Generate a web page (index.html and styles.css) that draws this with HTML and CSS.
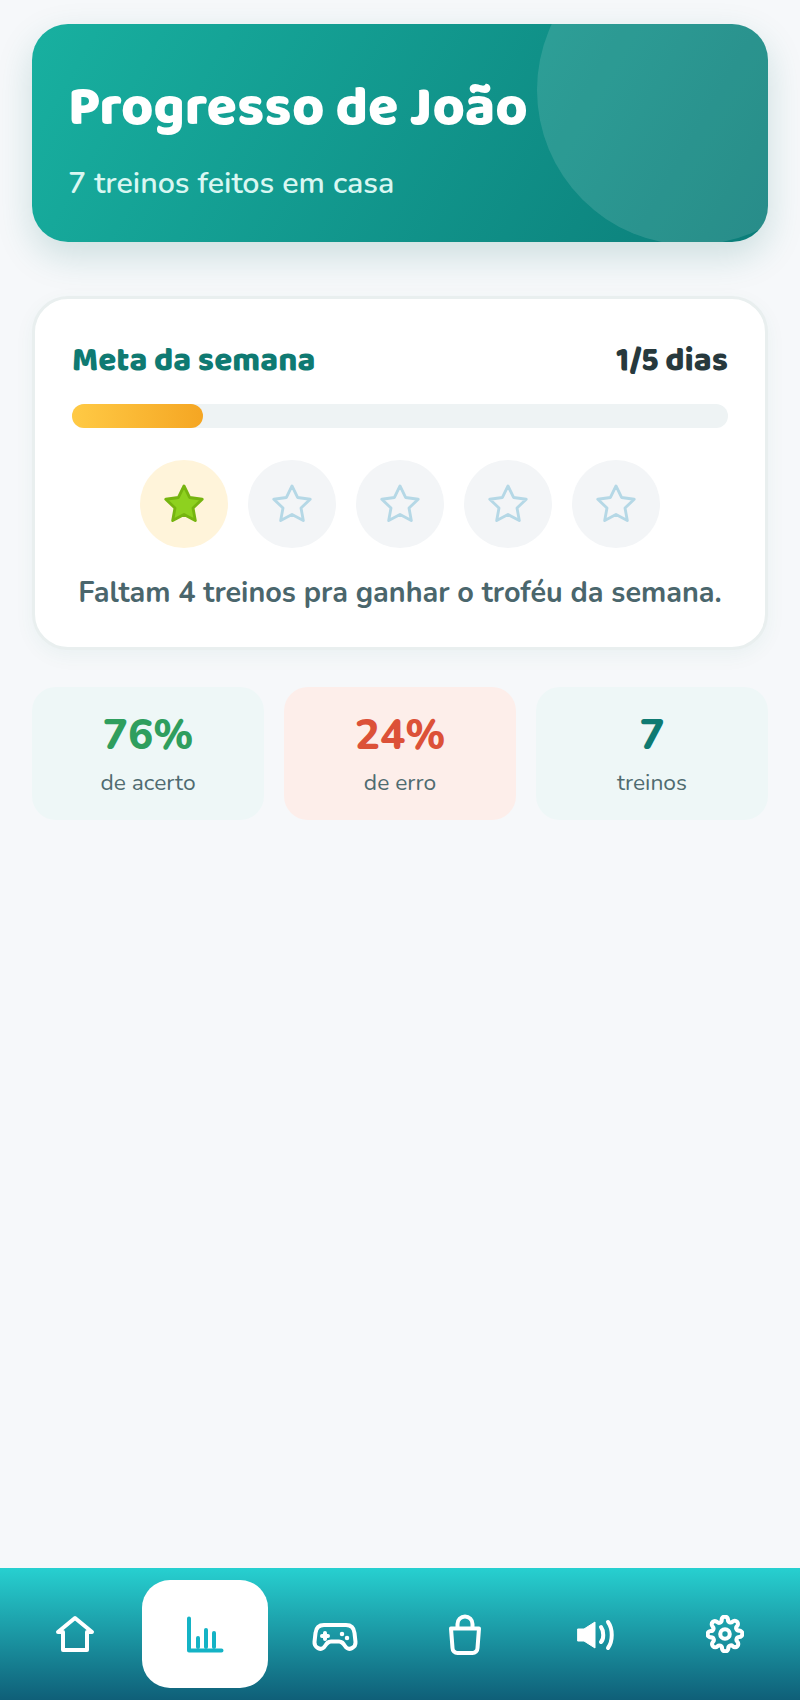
FILE: index.html
```html
<!DOCTYPE html>
<html lang="pt-BR">
<head>
  <meta charset="UTF-8">
  <title>Progresso</title>
  <link rel="stylesheet" href="styles.css">
</head>
<body>
  <main class="page">
    <header class="hero">
      <h1>Progresso de João</h1>
      <p>7 treinos feitos em casa</p>
    </header>

    <section class="goal-card">
      <div class="goal-head">
        <h2>Meta da semana</h2>
        <span class="goal-count">1/5 dias</span>
      </div>
      <div class="bar"><div class="bar-fill"></div></div>
      <div class="stars">
        <div class="star-slot done">
          <svg viewBox="0 0 24 24"><path class="star-on" d="M12 2.6l2.9 6 6.6.9-4.8 4.6 1.2 6.5L12 17.5l-5.900 3.100 1.200-6.500L2.500 9.500l6.600-.9z"/></svg>
        </div>
        <div class="star-slot">
          <svg viewBox="0 0 24 24"><path class="star-off" d="M12 2.6l2.9 6 6.6.9-4.8 4.6 1.2 6.5L12 17.500l-5.900 3.100 1.200-6.500L2.500 9.500l6.600-.9z"/></svg>
        </div>
        <div class="star-slot">
          <svg viewBox="0 0 24 24"><path class="star-off" d="M12 2.6l2.9 6 6.6.9-4.8 4.6 1.2 6.5L12 17.500l-5.900 3.100 1.200-6.500L2.500 9.500l6.600-.9z"/></svg>
        </div>
        <div class="star-slot">
          <svg viewBox="0 0 24 24"><path class="star-off" d="M12 2.6l2.9 6 6.6.9-4.8 4.6 1.2 6.5L12 17.500l-5.900 3.100 1.200-6.500L2.500 9.500l6.600-.9z"/></svg>
        </div>
        <div class="star-slot">
          <svg viewBox="0 0 24 24"><path class="star-off" d="M12 2.6l2.9 6 6.6.9-4.8 4.6 1.2 6.5L12 17.500l-5.900 3.100 1.200-6.500L2.500 9.500l6.600-.9z"/></svg>
        </div>
      </div>
      <p class="goal-note">Faltam 4 treinos pra ganhar o troféu da semana.</p>
    </section>

    <section class="stats">
      <div class="stat">
        <strong class="green">76%</strong>
        <span>de acerto</span>
      </div>
      <div class="stat stat-error">
        <strong class="red">24%</strong>
        <span>de erro</span>
      </div>
      <div class="stat">
        <strong class="teal">7</strong>
        <span>treinos</span>
      </div>
    </section>
  </main>

  <nav class="tabbar">
    <div class="tab">
      <svg viewBox="0 0 48 48"><path d="M7 22L24 8l17 14h-5v18H12V22z"/></svg>
    </div>
    <div class="tab active">
      <svg viewBox="0 0 48 48"><path d="M8 8.500V40.500h32.500"/><path d="M17 37v-9"/><path d="M25 37V20"/><path d="M33 37V23"/></svg>
    </div>
    <div class="tab">
      <svg viewBox="0 0 48 48">
        <path d="M13 15h22c5.500 0 8 3.500 8.500 8l1 9c.5 5-6.500 10-10.500 4-2-3-3-4.500-6-4.500h-8c-3 0-4 1.500-6 4.500-4 6-11 1-10.500-4l1-9c.5-4.500 3-8 8.500-8z"/>
        <path class="cross" d="M14 23v6M11 26h6"/>
        <path class="dot" d="M31 24h.01M36 28h.01"/>
      </svg>
    </div>
    <div class="tab">
      <svg viewBox="0 0 48 48"><path d="M10 18.500h28L36.500 38a5 5 0 0 1-5 5h-15a5 5 0 0 1-5-5z"/><path d="M16.500 18v-4a7.500 7.500 0 0 1 15 0v4"/></svg>
    </div>
    <div class="tab">
      <svg viewBox="0 0 48 48"><path class="solid" d="M7 19h6l11-7v26l-11-7H7z"/><path d="M30 17c3 4 3 12 0 15"/><path d="M37 12c5 7 5 19 0 26"/></svg>
    </div>
    <div class="tab">
      <svg class="gear" viewBox="0 0 24 24"><circle cx="12" cy="12" r="3"/><path d="M19.400 15a1.650 1.650 0 0 0 .33 1.820l.06.06a2 2 0 1 1-2.830 2.830l-.06-.06a1.650 1.650 0 0 0-2.800 1.170V21a2 2 0 1 1-4 0v-.09a1.650 1.650 0 0 0-2.800-1.170l-.06.06a2 2 0 1 1-2.830-2.830l.06-.06a1.650 1.650 0 0 0-1.170-2.800H3a2 2 0 1 1 0-4h.09a1.650 1.650 0 0 0 1.170-2.800l-.06-.06a2 2 0 1 1 2.830-2.830l.06.06a1.650 1.650 0 0 0 2.800-1.170V3a2 2 0 1 1 4 0v.09a1.650 1.650 0 0 0 2.800 1.170l.06-.06a2 2 0 1 1 2.830 2.830l-.06.06a1.650 1.650 0 0 0 1.170 2.800H21a2 2 0 1 1 0 4h-.09a1.650 1.650 0 0 0-1.510 1z"/></svg>
    </div>
  </nav>
</body>
</html>
```

FILE: styles.css
```css
* {
  box-sizing: border-box;
}

body {
  margin: 0;
  height: 1700px;
  background: #f6f8fa;
  font-family: "Nunito", "Noto Sans", sans-serif;
  display: flex;
  flex-direction: column;
}

.page {
  flex: 1;
  padding: 24px 32px 0;
}

.hero {
  position: relative;
  overflow: hidden;
  height: 218px;
  padding: 55px 36px 0;
  border-radius: 36px;
  background: linear-gradient(120deg, #18b0a0, #0b7d79);
  box-shadow: 0 14px 36px rgba(15, 110, 105, 0.18);
  color: #fff;
}

.hero::after {
  content: "";
  position: absolute;
  right: -79px;
  top: -89px;
  width: 310px;
  height: 310px;
  border-radius: 50%;
  background: rgba(255, 255, 255, 0.12);
}

.hero h1 {
  margin: 0;
  font-family: "Baloo 2", "Nunito", sans-serif;
  font-size: 55.5px;
  font-weight: 800;
  line-height: 60px;
}

.hero p {
  margin: 23px 0 0;
  font-size: 30.4px;
  font-weight: 600;
  color: #d9f7f2;
}

.goal-card {
  margin-top: 54px;
  height: 354px;
  padding: 42px 37px 0;
  background: #fff;
  border: 3px solid #e9efef;
  border-radius: 36px;
  box-shadow: 0 6px 20px rgba(15, 110, 105, 0.05);
}

.goal-head {
  display: flex;
  justify-content: space-between;
  align-items: center;
  height: 38px;
}

.goal-head h2 {
  margin: 0;
  font-family: "Baloo 2", "Nunito", sans-serif;
  font-size: 33px;
  font-weight: 800;
  color: #0f7a72;
}

.goal-count {
  font-family: "Baloo 2", "Nunito", sans-serif;
  font-size: 33px;
  font-weight: 800;
  color: #27393d;
}

.bar {
  margin-top: 25px;
  height: 24px;
  border-radius: 12px;
  background: #eef3f4;
}

.bar-fill {
  width: 20%;
  height: 100%;
  border-radius: 12px;
  background: linear-gradient(90deg, #ffca45, #f5a623);
}

.stars {
  display: flex;
  justify-content: center;
  gap: 20px;
  margin-top: 32px;
}

.star-slot {
  width: 88px;
  height: 88px;
  border-radius: 50%;
  background: #f3f5f7;
  display: flex;
  align-items: center;
  justify-content: center;
}

.star-slot.done {
  background: #fff4da;
}

.star-slot svg {
  width: 46px;
  height: 46px;
}

.star-on {
  fill: #8ed11f;
  stroke: #76b40f;
  stroke-width: 1.5;
  stroke-linejoin: round;
}

.star-off {
  fill: none;
  stroke: #b5d8e6;
  stroke-width: 1.5;
  stroke-linejoin: round;
}

.goal-note {
  margin: 25px 0 0;
  text-align: center;
  font-size: 28.8px;
  font-weight: 700;
  color: #4a666c;
  white-space: nowrap;
}

.stats {
  display: grid;
  grid-template-columns: repeat(3, 1fr);
  gap: 20px;
  margin-top: 37px;
}

.stat {
  height: 133px;
  padding-top: 2px;
  border-radius: 24px;
  background: #eef7f7;
  display: flex;
  flex-direction: column;
  align-items: center;
  justify-content: center;
}

.stat-error {
  background: #fdeeea;
}

.stat strong {
  font-size: 42px;
  font-weight: 800;
  line-height: 50px;
}

.stat span {
  margin-top: 6px;
  font-size: 22.8px;
  color: #4f6b70;
}

.green { color: #2f9e5e; }
.red { color: #dc5138; }
.teal { color: #0f7a72; }

.tabbar {
  height: 132px;
  padding: 12px 10px;
  background: linear-gradient(180deg, #27d0d0, #0f5f78);
  display: grid;
  grid-template-columns: repeat(6, 1fr);
  justify-items: center;
  align-items: center;
}

.tab {
  width: 126px;
  height: 108px;
  border-radius: 28px;
  display: flex;
  align-items: center;
  justify-content: center;
}

.tab.active {
  background: #fff;
}

.tab svg {
  width: 48px;
  height: 48px;
  fill: none;
  stroke: #fff;
  stroke-width: 4;
  stroke-linecap: round;
  stroke-linejoin: round;
}

.tab svg.gear {
  width: 38px;
  height: 38px;
  stroke-width: 2.6;
}

.tab.active svg {
  stroke: #14b3c5;
}

.tab svg .solid {
  fill: #fff;
  stroke-width: 1;
}

.tab svg .dot {
  stroke-width: 4.5;
}
```
